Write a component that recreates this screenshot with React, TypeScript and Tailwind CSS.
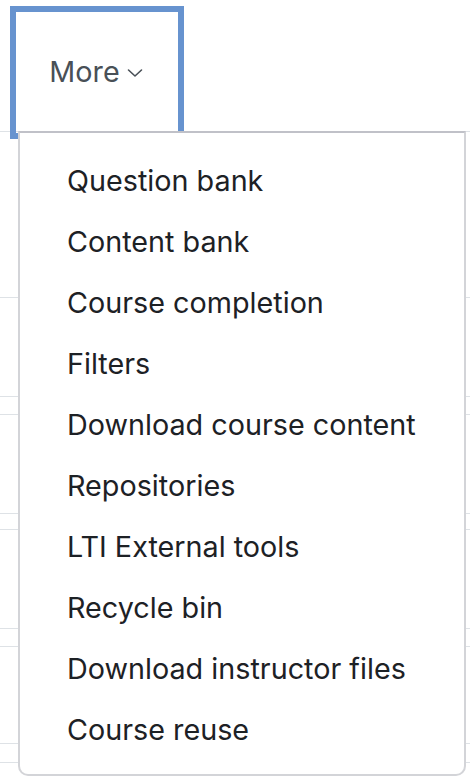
import React from "react";

const items = [
  "Question bank",
  "Content bank",
  "Course completion",
  "Filters",
  "Download course content",
  "Repositories",
  "LTI External tools",
  "Recycle bin",
  "Download instructor files",
  "Course reuse",
];

const lines = [297, 396, 414, 513, 529, 628, 646, 743, 762];

export default function App() {
  let start = 132;
  const blocks = lines.map((y) => {
    const h = y + 1 - start;
    start = y + 1;
    return h;
  });
  return (
    <div
      className="relative w-[470px] h-[780px] overflow-hidden bg-white"
      style={{ fontFamily: "Inter, 'Noto Sans', sans-serif" }}
    >
      <div className="h-[132px] border-b border-[#dee2e6] pl-[10px] pt-[6px] flex items-start">
        <div className="w-[174px] h-[133px] shrink-0 border-[6px] border-[#6793cf] flex items-center justify-center pb-[1px] pr-[2px]">
          <span className="text-[28.75px] leading-none text-[#495057]">More</span>
          <svg width="16" height="10" viewBox="0 0 16 10" className="ml-[7px] mt-[2px]">
            <polyline
              points="1.5,2 8,8 14.5,2"
              fill="none"
              stroke="#495057"
              strokeWidth="1.6"
              strokeLinecap="round"
              strokeLinejoin="round"
            />
          </svg>
        </div>
      </div>
      <div className="flex flex-col">
        {blocks.map((h, i) => (
          <div key={i} className="border-b border-[#dee2e6]" style={{ height: h }} />
        ))}
      </div>
      <div className="absolute left-[18px] top-[131px] w-[448px] h-[645px] z-10 bg-white border-2 border-[#d3d4d8] border-t-[#c0c1c8] rounded-b-[10px] pt-[17px] pb-[13px]">
        <ul className="flex flex-col">
          {items.map((t) => (
            <li
              key={t}
              className="h-[61px] flex items-center pl-[47px] text-[28.75px] leading-[61px] text-[#1d2125] whitespace-nowrap"
            >
              {t}
            </li>
          ))}
        </ul>
      </div>
    </div>
  );
}
